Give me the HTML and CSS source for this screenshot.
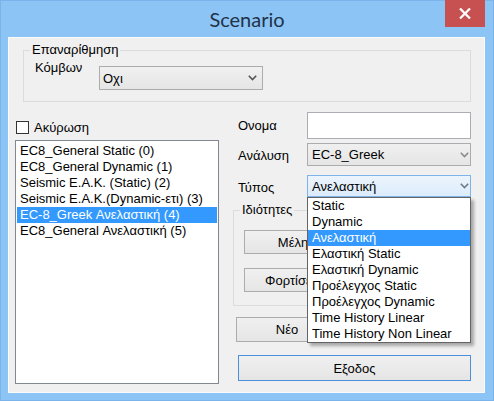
FILE: index.html
```html
<!DOCTYPE html>
<html lang="el">
<head>
<meta charset="utf-8">
<title>Scenario</title>
<link rel="stylesheet" href="styles.css">
</head>
<body>
<div class="window">
  <div class="titlebar">
    <div></div>
    <div class="title">Scenario</div>
    <div class="tb-right">
      <div class="close">
        <svg width="12" height="11" viewBox="0 0 12 11"><path d="M1 0.5 L11 10.5 M11 0.5 L1 10.5" stroke="#fff" stroke-width="2.2" fill="none"/></svg>
      </div>
    </div>
  </div>
  <div class="client">
    <fieldset class="group renum">
      <legend>Επαναρίθμηση</legend>
      <div class="renum-row">
        <span class="lbl">Κόμβων</span>
        <div class="combo combo-kombon">
          <span>Οχι</span>
          <svg class="chev" width="9" height="6" viewBox="0 0 9 6"><path d="M0.8 0.8 L4.5 4.6 L8.2 0.8" stroke="#555" stroke-width="1.6" fill="none"/></svg>
        </div>
      </div>
    </fieldset>
    <div class="main">
      <div class="left">
        <div class="chkrow"><span class="chk"></span><span>Ακύρωση</span></div>
        <ul class="listbox">
          <li>EC8_General Static (0)</li>
          <li>EC8_General Dynamic (1)</li>
          <li>Seismic E.A.K. (Static) (2)</li>
          <li>Seismic E.A.K.(Dynamic-ετι) (3)</li>
          <li class="sel">EC-8_Greek Ανελαστική (4)</li>
          <li>EC8_General Ανελαστική (5)</li>
        </ul>
      </div>
      <div class="right">
        <div class="frow row-name"><span class="flabel">Ονομα</span><div class="textbox"></div></div>
        <div class="frow row-anal"><span class="flabel">Ανάλυση</span>
          <div class="combo combo-right">
            <span>EC-8_Greek</span>
            <svg class="chev chev-r" width="9" height="6" viewBox="0 0 9 6"><path d="M0.8 0.8 L4.5 4.6 L8.2 0.8" stroke="#8a8a8a" stroke-width="1.6" fill="none"/></svg>
          </div>
        </div>
        <div class="frow row-type"><span class="flabel">Τύπος</span>
          <div class="combo-wrap">
            <div class="combo combo-right combo-focus">
              <span>Ανελαστική</span>
              <svg class="chev chev-r" width="9" height="6" viewBox="0 0 9 6"><path d="M0.8 0.8 L4.5 4.6 L8.2 0.8" stroke="#6d7b8a" stroke-width="1.6" fill="none"/></svg>
            </div>
            <ul class="dropdown">
              <li>Static</li>
              <li>Dynamic</li>
              <li class="sel">Ανελαστική</li>
              <li>Ελαστική Static</li>
              <li>Ελαστική Dynamic</li>
              <li>Προέλεγχος Static</li>
              <li>Προέλεγχος Dynamic</li>
              <li>Time History Linear</li>
              <li>Time History Non Linear</li>
            </ul>
          </div>
        </div>
        <fieldset class="group props">
          <legend>Ιδιότητες</legend>
          <div class="props-btns">
            <div class="btn btn-prop">Μέλη</div>
            <div class="btn btn-prop">Φορτίσεις</div>
          </div>
        </fieldset>
        <div class="btn btn-new">Νέο</div>
        <div class="btn btn-exit">Εξοδος</div>
      </div>
    </div>
  </div>
</div>
</body>
</html>
```

FILE: styles.css
```css
html, body {
  margin: 0;
  padding: 0;
}
body {
  width: 494px;
  height: 401px;
  overflow: hidden;
  font-family: "Liberation Sans", Arial, sans-serif;
  font-size: 13px;
  color: #000;
}
.window {
  width: 494px;
  height: 401px;
  box-sizing: border-box;
  background: #8cc4f5;
  box-shadow: inset 0 0 0 1px #7ab4ea;
  display: flex;
  flex-direction: column;
}
.titlebar {
  height: 37px;
  flex: none;
  display: grid;
  grid-template-columns: 1fr auto 1fr;
  align-items: start;
}
.title {
  font-family: Lato, "Open Sans", sans-serif;
  font-size: 20px;
  line-height: 24px;
  margin-top: 7px;
  color: #1f3249;
}
.tb-right {
  display: flex;
  justify-content: flex-end;
}
.close {
  width: 40px;
  height: 27px;
  margin-right: 9px;
  background: #c75050;
  display: flex;
  align-items: center;
  justify-content: center;
}
.client {
  margin: 0 9px 8px 8px;
  height: 356px;
  flex: none;
  background: #f0f0f0;
  box-shadow: inset 0 0 0 1px #fbfbfb;
  display: flex;
  flex-direction: column;
}
.group {
  border: 1px solid #dcdcdc;
  margin: 0;
  padding: 0;
  min-width: 0;
  box-sizing: border-box;
}
.group legend {
  padding: 0 2px;
  margin-left: 6px;
  font-size: 13px;
  line-height: 16px;
}
.renum {
  margin: 5px 14px 0 15px;
  padding: 2px 0 11px 0;
}
.renum-row {
  display: flex;
  align-items: flex-start;
  margin-left: 11px;
}
.renum-row .lbl {
  width: 64px;
  line-height: 16px;
}
.combo {
  box-sizing: border-box;
  display: flex;
  align-items: center;
  border: 1px solid #acacac;
  background: linear-gradient(#f0f0f0, #e5e5e5);
  padding-left: 4px;
}
.combo-kombon {
  margin-top: 6px;
  width: 164px;
  height: 24px;
  padding-left: 3px;
}
.chev {
  margin-left: auto;
  margin-right: 5px;
  flex: none;
}
.chev-r {
  margin-right: 1px;
}
.main {
  display: flex;
  margin-top: 10px;
}
.left {
  margin-left: 7px;
  width: 204px;
  padding-top: 8px;
}
.chkrow {
  display: flex;
  align-items: center;
  height: 15px;
  padding-left: 1px;
}
.chk {
  width: 13px;
  height: 13px;
  box-sizing: border-box;
  border: 1px solid #333;
  background: #fff;
  margin-right: 5px;
}
.listbox {
  list-style: none;
  margin: 5px 0 0 0;
  padding: 2px 1px 0 1px;
  width: 204px;
  height: 244px;
  box-sizing: border-box;
  border: 1px solid #828790;
  background: #fff;
}
.listbox li {
  height: 16px;
  line-height: 16px;
  padding-left: 3px;
  white-space: nowrap;
}
.listbox li.sel,
.dropdown li.sel {
  background: #3399ff;
  color: #fff;
}
.right {
  margin-left: 11px;
  width: 241px;
  display: flex;
  flex-direction: column;
  align-items: flex-start;
}
.frow {
  display: flex;
  align-items: center;
}
.flabel {
  width: 77px;
  box-sizing: border-box;
  padding-left: 8px;
  line-height: 16px;
}
.textbox {
  width: 164px;
  height: 27px;
  box-sizing: border-box;
  border: 1px solid #abadb3;
  background: #fff;
}
.row-anal {
  margin-top: 4px;
}
.row-anal .flabel {
  padding-top: 2px;
}
.combo-right {
  width: 164px;
  height: 23px;
}
.row-type {
  margin-top: 9px;
}
.row-type .flabel {
  padding-top: 3px;
}
.combo-wrap {
  position: relative;
  width: 164px;
  height: 22px;
}
.combo-focus {
  height: 22px;
  border-color: #7eb4ea;
  background: linear-gradient(#ecf4fc, #dcecfc);
}
.dropdown {
  position: absolute;
  top: 100%;
  left: 0;
  z-index: 5;
  width: 164px;
  box-sizing: border-box;
  list-style: none;
  margin: 0;
  padding: 0;
  border: 1px solid #646464;
  background: #fff;
  box-shadow: 3px 3px 3px rgba(0, 0, 0, 0.3);
}
.dropdown li {
  height: 16px;
  line-height: 16px;
  padding-left: 4px;
  white-space: nowrap;
}
.props {
  margin: 5px 0 0 3px;
  width: 238px;
  padding: 12px 0 13px 0;
}
.props-btns {
  margin-left: 10px;
  display: flex;
  flex-direction: column;
  gap: 14px;
}
.btn {
  box-sizing: border-box;
  border: 1px solid #acacac;
  background: linear-gradient(#f0f0f0, #e5e5e5);
  display: flex;
  align-items: center;
  justify-content: center;
  white-space: nowrap;
}
.btn-prop {
  width: 98px;
  height: 24px;
}
.btn-new {
  margin: 11px 0 0 6px;
  width: 102px;
  height: 25px;
}
.btn-exit {
  margin: 13px 0 0 8px;
  width: 233px;
  height: 26px;
  border-color: #4a90dd;
}
```
